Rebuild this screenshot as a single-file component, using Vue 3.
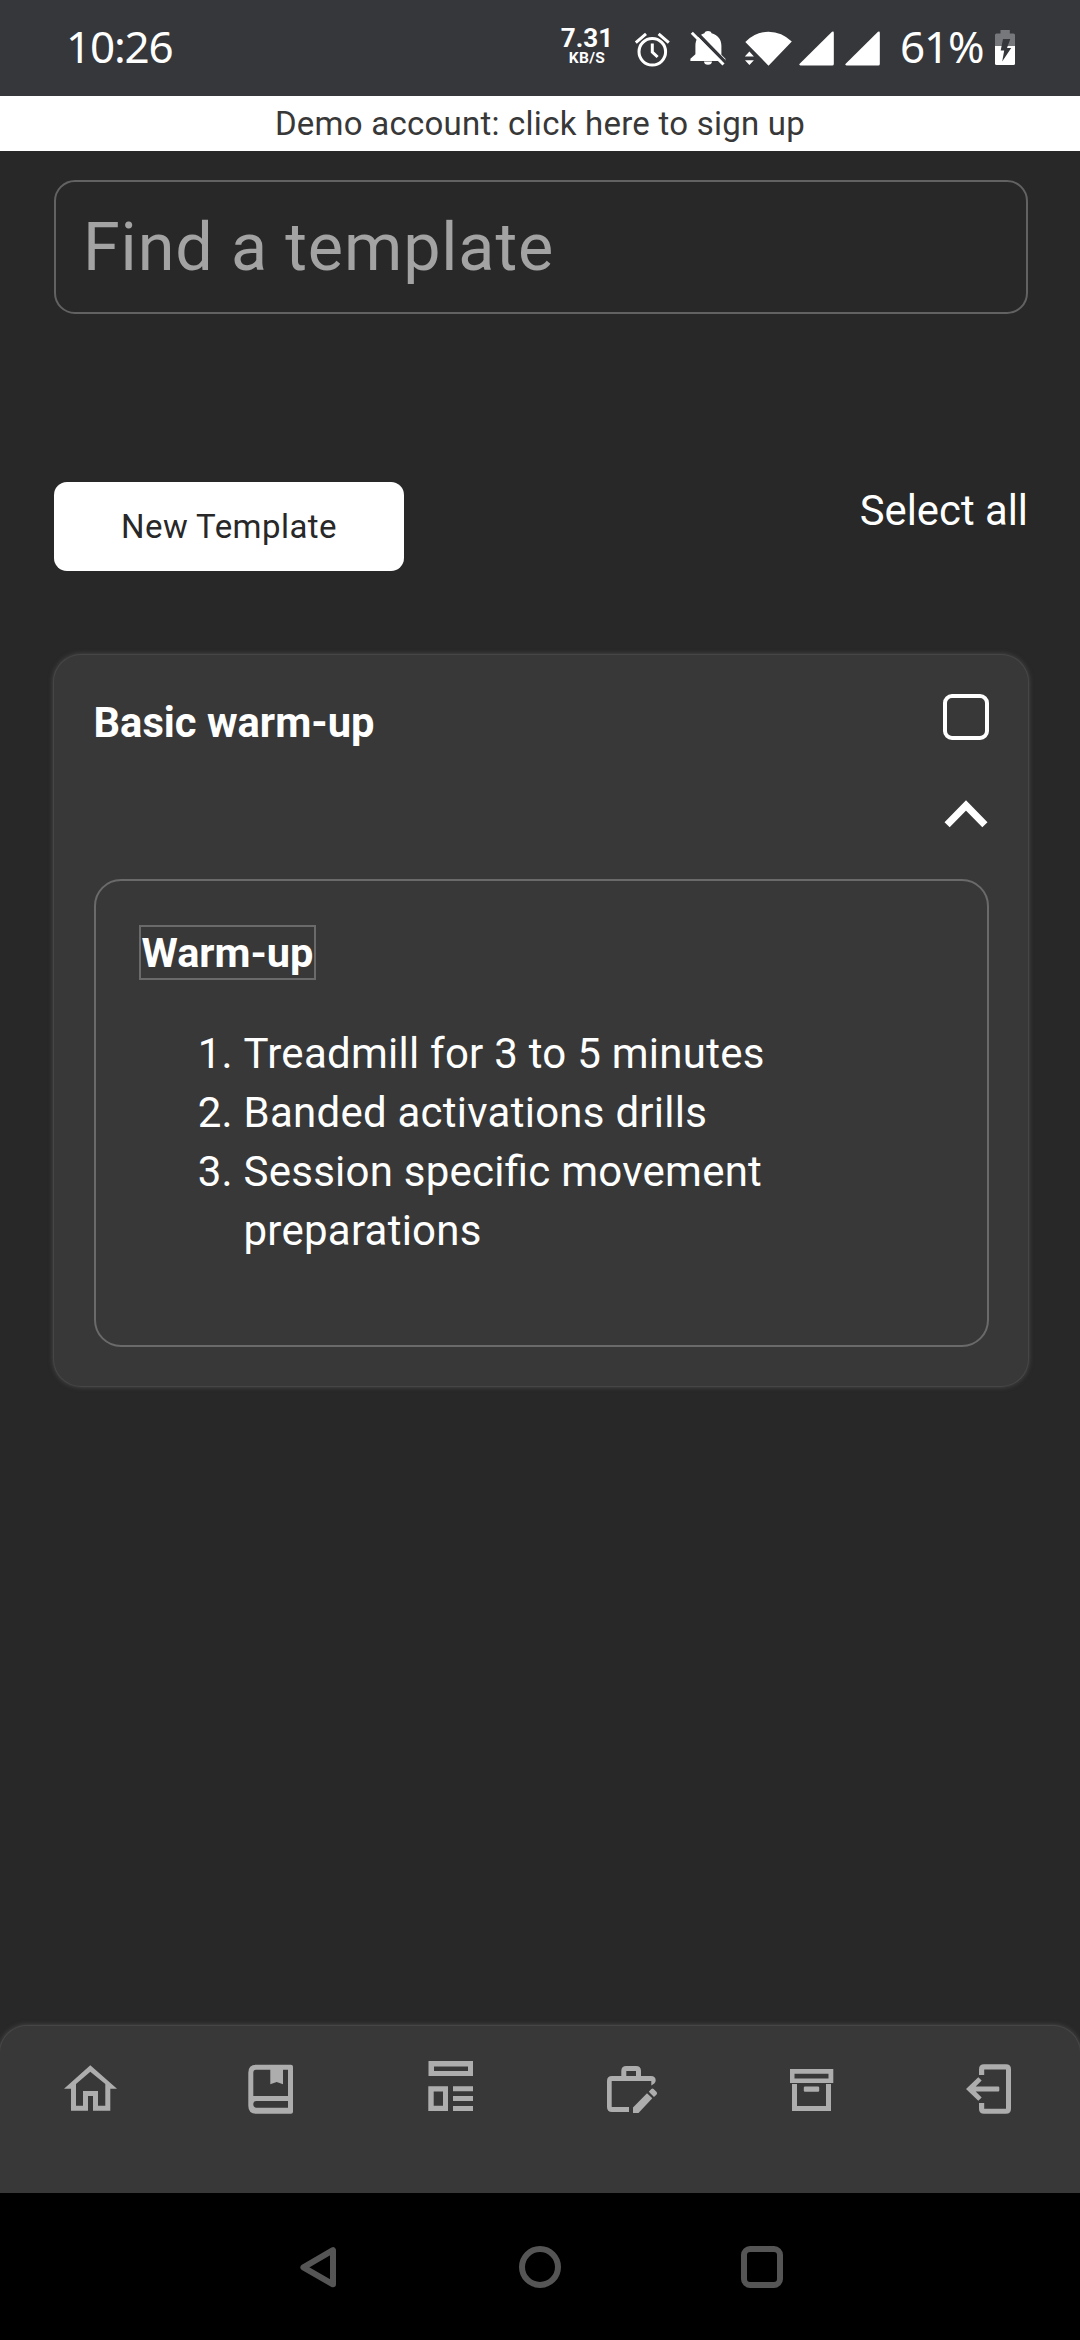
<script setup>
const steps = [
  'Treadmill for 3 to 5 minutes',
  'Banded activations drills',
  'Session specific movement preparations',
]
</script>

<template>
  <div class="screen">
    <header class="status">
      <span class="clock">10:26</span>
      <div class="indicators">
        <div class="speed"><b class="rate">7.31</b><b class="unit">KB/S</b></div>
        <svg class="alarm" width="37" height="37" viewBox="634 31 37 37" fill="none" stroke="#fff" stroke-width="3">
          <circle cx="652.3" cy="51.8" r="13.3" />
          <path d="M635.8 42.6 646 33.8M668.8 42.6 658.6 33.8M652.3 43.5V52L657.6 57" />
        </svg>
        <svg class="bell" width="36" height="36" viewBox="690 30 36 36">
          <path fill="#fff" d="M708 31c2 0 3 .8 3.600 2.200 6 1.500 9.800 6 9.800 12.600v9l4 4V61h-35v-2.200l5-4.500V45.800c0-6.600 3.500-11.100 9-12.600.6-1.400 1.600-2.200 3.600-2.200zM704 61.500h8c0 2-1.500 3.300-4 3.300s-4-1.300-4-3.300z" />
          <path fill="none" stroke="#36373b" stroke-width="3.500" d="M693.500 29.500 727.500 64.500" />
          <path fill="none" stroke="#fff" stroke-width="3" d="M691.800 32.800 723.500 64.500" />
        </svg>
        <svg class="wifi" width="48" height="36" viewBox="745 31 48 36" fill="#fff">
          <path d="M745.300 42Q755 32 768.500 31.700 782 32 791.800 41.500L768.500 65.700zM749.400 51.500l4.500 4.900h-9zM744.900 60.200h9l-4.500 4.900z" />
        </svg>
        <svg class="signal" width="35" height="35" viewBox="0 0 35 35" fill="#fff"><path d="M33 .8q1.800-1 1.800 1V33q0 1.500-1.500 1.500H1.500Q-.5 34 .7 32.700z" /></svg>
        <svg class="signal second" width="35" height="35" viewBox="0 0 35 35" fill="#fff"><path d="M33 .8q1.800-1 1.800 1V33q0 1.500-1.500 1.500H1.500Q-.5 34 .7 32.700z" /></svg>
        <span class="percent">61%</span>
        <svg class="battery" width="20" height="35" viewBox="995 30 20 35">
          <path fill="#77787b" d="M1000.500 30h9.300v3.500h3.700q1.500 0 1.500 1.500V46h-20V35q0-1.500 1.500-1.500h4z" />
          <path fill="#fff" d="M995 46h20v17.500q0 1.500-1.500 1.500h-17q-1.500 0-1.500-1.500z" />
          <path fill="#36373b" d="M1003 39h7.300l-3.300 9h4.200l-9 13.500 2-11h-3.500z" />
        </svg>
      </div>
    </header>

    <a class="banner">Demo account: click here to sign up</a>

    <main class="content">
      <div class="search">Find a template</div>
      <div class="actions">
        <button class="new">New Template</button>
        <span class="select">Select all</span>
      </div>

      <section class="card">
        <div class="card-head">
          <h2>Basic warm-up</h2>
          <div class="controls">
            <span class="check"></span>
            <svg width="46" height="28" viewBox="943 800 46 28" fill="none" stroke="#fff" stroke-width="7.200"><path d="M947.100 824.800 966 805.500 984.900 824.800" /></svg>
          </div>
        </div>
        <div class="detail">
          <div class="title"><strong>Warm-up</strong></div>
          <ol>
            <li v-for="step in steps" :key="step">{{ step }}</li>
          </ol>
        </div>
      </section>
    </main>

    <nav class="tabs">
      <svg viewBox="0 0 60 60"><path d="M30.300 7.300 57 30.700H50.300V52.700H33V38H28V52.700H11V30.700H4ZM30.300 13.700 16 26V47.700H23V33H38V47.700H45.300V26Z" /></svg>
      <svg viewBox="0 0 60 60"><path d="M16 6.700H51q2 0 2 2V53.700q0 2-2 2H16.300q-8 0-8-8V14.700q0-8 7.700-8zM16 11.700q-2.700 0-2.700 3V38H48V11.700zM16.500 43q-3.200 0-3.200 3.300t3.200 3.400H48V43z" /><path d="M30.300 11H43V26.200L36.700 24 30.300 26.200z" /></svg>
      <svg viewBox="0 0 60 60"><path d="M8.500 3H53V18H8.500zM14 8.500V13H48V8.500zM8.300 28.300H28V53H8.300zM13.700 33.500V47.800H23V33.500zM33 28.300H53V33.300H33zM33 38H53V43H33zM33 47.900H53V52.900H33z" /></svg>
      <svg viewBox="0 0 60 60"><path d="M29 54H12q-5 0-5-5V23q0-5 5-5H21.300V13q0-5 5-5H36q5 0 5 5v5H51q4.700 0 4.700 4.500 0 1.600-1.400 2.900L51.300 27.600V23H11.700V49H29zM26.300 13v5H36V13z" /><path d="M33 55V49.500L47 35.300 52.300 40.200 38.500 55zM48.800 33.700 51.300 31.100q1.200-1 2.300 0l3 3q1 1.200 0 2.300L54 39z" /></svg>
      <svg viewBox="0 0 60 60"><path d="M10 11H53.300V25H10zM14.500 15.700V20.500H48.500V15.700zM12 26H17V48H46V26H51V53H12z" /><rect x="23.800" y="28.500" width="15.400" height="5.300" rx="1.200" /></svg>
      <svg viewBox="0 0 60 60"><path d="M19 17V11.300q0-5 5-5H46q5 0 5 5V50.700q0 5-5 5H24q-5 0-5-5V45h5.200v5.700H46V11.500H24.200V17zM6 31 18.300 19.200 21.700 22.500 15.700 28.500H38.300q1 0 1 1v3q0 1-1 1H15.700l6 6L18.300 42.800z" /></svg>
    </nav>

    <footer class="system">
      <svg viewBox="0 0 42 42"><path d="M36 4.200V38.300L6.400 21.300z" stroke-linejoin="round" /></svg>
      <svg viewBox="0 0 42 42"><circle cx="21" cy="21" r="18" /></svg>
      <svg viewBox="0 0 42 42"><rect x="3" y="3" width="36" height="36" rx="6" /></svg>
    </footer>
  </div>
</template>

<style>
body { background: #282828; }
</style>

<style scoped>
* { box-sizing: border-box; }
.screen {
  width: 1080px;
  height: 2340px;
  display: flex;
  flex-direction: column;
  background: #282828;
  color: #fff;
  font: 41.25px/58.95px Roboto, sans-serif;
  overflow: hidden;
}
.status {
  height: 96px;
  display: flex;
  justify-content: space-between;
  padding: 0 65px 0 66px;
  background: #36373b;
  flex: none;
}
.clock, .percent { font: 44px/60px "Noto Sans", sans-serif; letter-spacing: -1.2px; }
.clock { margin-top: 16px; }
.indicators { display: flex; align-items: flex-start; }
.speed { width: 50px; display: flex; flex-direction: column; align-items: center; margin: 26px 22px 0 0; }
.rate { font-size: 26px; line-height: 24px; }
.unit { font-size: 15.500px; line-height: 16px; letter-spacing: .4px; }
.alarm { margin: 31px 19px 0 0; }
.bell { margin: 30px 19px 0 0; }
.wifi { margin: 31px 6px 0 0; }
.signal { margin: 31px 11px 0 0; }
.signal.second { margin-right: 20px; }
.percent { width: 95px; margin-top: 16px; }
.battery { margin-top: 30px; }
.banner {
  height: 55px;
  flex: none;
  background: #fff;
  color: #383838;
  font-size: 33px;
  line-height: 55px;
  letter-spacing: .24px;
  text-align: center;
}
.content { flex: 1; padding: 29px 52px 0 54px; }
.search {
  height: 134px;
  border: 2px solid #626262;
  border-radius: 21px;
  padding-left: 27px;
  font-size: 66.500px;
  line-height: 131px;
  letter-spacing: .85px;
  color: #a3a3a3;
}
.actions { display: flex; justify-content: space-between; margin-top: 168px; }
.new {
  width: 350px;
  height: 89px;
  border: 0;
  border-radius: 13px;
  background: #fff;
  color: #282828;
  font: 33px/88px Roboto, sans-serif;
  letter-spacing: .45px;
}
.select { font-size: 41.800px; }
.card {
  height: 731px;
  margin-top: 84px;
  padding: 39px 39.500px;
  border-radius: 27px;
  background: #383838;
  box-shadow: 0 0 0 1px #464646, 0 0 5px 1px #4c4c4c;
}
.card-head { display: flex; justify-content: space-between; height: 185px; }
h2 { margin: 0; font-size: 41.700px; font-weight: 700; }
.controls { display: flex; flex-direction: column; align-items: center; }
.check { width: 46px; height: 46px; border: 4px solid #fff; border-radius: 9px; margin-bottom: 60px; }
.detail { height: 468px; border: 2px solid #6a6a6a; border-radius: 27px; padding: 43px; }
.title strong { border: 2px solid #6a6a6a; padding: 1px; font-size: 41.500px; }
ol {
  margin: 42px 0 0;
  padding: 0 0 0 105px;
  font-size: 42px;
  letter-spacing: .25px;
  font-feature-settings: "liga" 1;
}
li { padding-right: 50px; }
.tabs {
  height: 167px;
  flex: none;
  display: flex;
  justify-content: space-around;
  padding-top: 32px;
  border-radius: 27px 27px 0 0;
  background: #383838;
  box-shadow: 0 0 0 1px #464646, 0 0 5px 1px #4c4c4c;
}
.tabs svg { width: 60px; height: 60px; fill: #adadad; fill-rule: evenodd; }
.system { position: relative; height: 147px; flex: none; display: flex; justify-content: center; align-items: center; gap: 180px; background: #000; }
.system svg { width: 42px; height: 42px; fill: none; stroke: #555; stroke-width: 6; }
</style>
